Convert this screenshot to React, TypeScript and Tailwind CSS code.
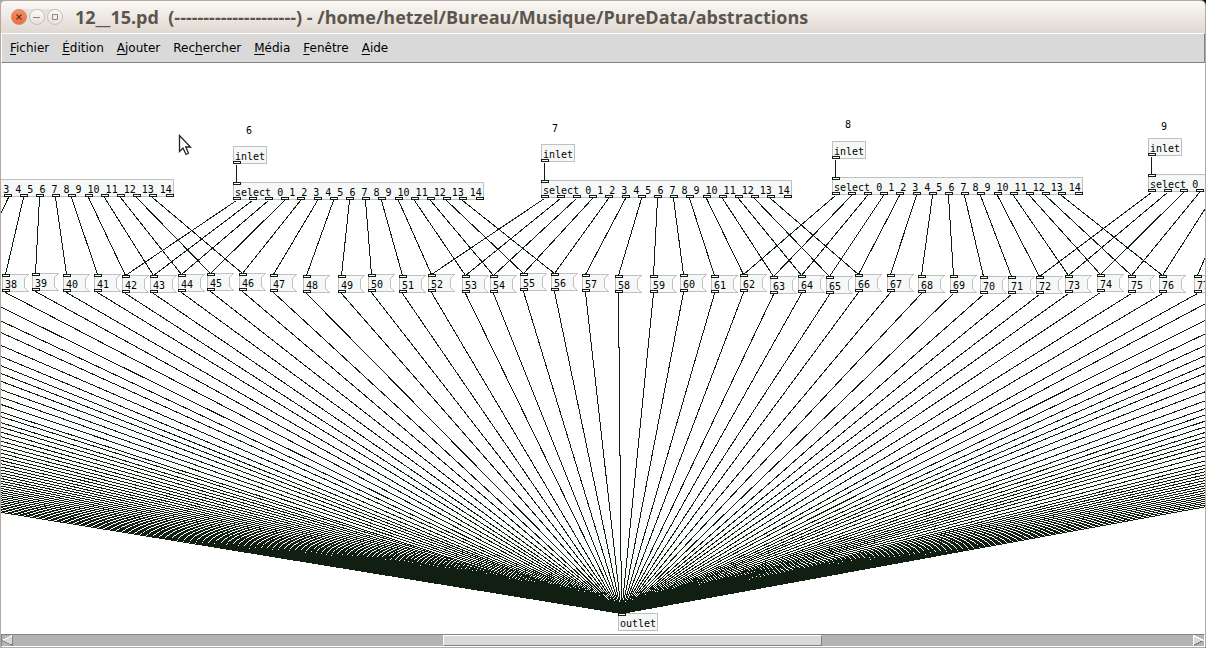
import type { ReactNode } from "react";

const INK = "#101f12";
const SELECT_WIDTH = 251;
const SELECT_OUTLETS = 16;
const BOX_HEIGHT = 18;
const FIRST_MESSAGE = 38;
// wires leave and enter at the middle of a port
const PORT_CENTER = 3;

// left, top of every message box, starting with 38
const messages = [
  [1, 211], [31, 210], [62, 211], [93, 211], [121, 212],
  [149, 212], [177, 211], [206, 210], [238, 210], [269, 211],
  [302, 212], [337, 212], [367, 211], [398, 212], [427, 211],
  [461, 212], [489, 212], [519, 210], [550, 210], [581, 211],
  [614, 212], [649, 212], [679, 211], [710, 212], [739, 211],
  [769, 213], [797, 212], [825, 213], [854, 211], [886, 211],
  [917, 212], [949, 212], [979, 213], [1007, 213], [1035, 213],
  [1064, 212], [1096, 211], [1127, 212], [1158, 212], [1193, 212],
];

// outlet `from` of each select feeds message `to`, the next ones follow
const selects = [
  { x: -78, y: 116, from: 6, to: 38 },
  { x: 232, y: 119, from: 0, to: 42 },
  { x: 540, y: 117, from: 0, to: 52 },
  { x: 831, y: 114, from: 0, to: 62 },
  { x: 1147, y: 111, from: 0, to: 72 },
];

const inlets = [
  { label: "6", x: 232, y: 83, labelX: 245, labelY: 62 },
  { label: "7", x: 540, y: 81, labelX: 551, labelY: 60 },
  { label: "8", x: 831, y: 78, labelX: 844, labelY: 56 },
  { label: "9", x: 1147, y: 75, labelX: 1160, labelY: 58 },
];

const outlet = { x: 617, y: 550 };

// messages scrolled out of view that are still wired to the outlet
const hiddenLeft = [
  -30, -61, -89, -123, -155, -184, -210, -238, -270, -301, -333, -369, -392,
  -424, -449, ...Array.from({ length: 31 }, (_, i) => -478 - i * 29),
];
const hiddenRight = [
  1225, 1259, 1290, 1319, 1347, 1375, 1400, 1432, 1465, 1501, 1535, 1564, 1594,
  1624, 1655, 1682, 1711, 1740, 1772, 1809, 1848, 1883,
  ...Array.from({ length: 17 }, (_, i) => 1912 + i * 29),
];

const menus = [
  ["", "F", "ichier"],
  ["", "É", "dition"],
  ["", "A", "jouter"],
  ["Rec", "h", "ercher"],
  ["", "M", "édia"],
  ["", "F", "enêtre"],
  ["", "A", "ide"],
];

const selectText = "select 0 1 2 3 4 5 6 7 8 9 10 11 12 13 14";

function outletOffset(i: number) {
  return Math.floor(((SELECT_WIDTH - 8) * i) / (SELECT_OUTLETS - 1));
}

function Wires() {
  // x1, y1, x2, y2 as port positions
  const lines: number[][] = [[4, 134, -33, 211]];

  inlets.forEach(({ x, y }) =>
    lines.push([x, y + BOX_HEIGHT, x, y + 2 * BOX_HEIGHT]),
  );

  selects.forEach((s) => {
    for (let i = s.from; i < SELECT_OUTLETS - 1; i++) {
      const target = messages[s.to - FIRST_MESSAGE + i - s.from];
      if (!target) break;
      lines.push([s.x + outletOffset(i), s.y + BOX_HEIGHT, target[0], target[1]]);
    }
  });

  messages.forEach(([x, y]) =>
    lines.push([x, y + BOX_HEIGHT, outlet.x, outlet.y]),
  );
  [...hiddenLeft, ...hiddenRight].forEach((x) =>
    lines.push([x - PORT_CENTER, 229, outlet.x, outlet.y]),
  );

  return (
    <svg
      className="absolute inset-0 size-full"
      shapeRendering="crispEdges"
      stroke={INK}
      aria-hidden="true"
    >
      <g transform={`translate(${PORT_CENTER + 0.5} 0.5)`}>
        {lines.map(([x1, y1, x2, y2], i) => (
          <line key={i} x1={x1} y1={y1} x2={x2} y2={y2} />
        ))}
      </g>
    </svg>
  );
}

function Port({ x = 0, bottom = false }: { x?: number; bottom?: boolean }) {
  return (
    <span
      className={`absolute h-[3px] w-2 border border-[#101f12] bg-white ${
        bottom ? "bottom-0" : "top-0"
      }`}
      style={{ left: x }}
    />
  );
}

function ObjectBox({
  x,
  y,
  text,
  children,
}: {
  x: number;
  y: number;
  text: string;
  children?: ReactNode;
}) {
  return (
    <div className="absolute h-[18px]" style={{ left: x, top: y }}>
      <div className="h-full border border-[#c0c0c0] bg-[#f6f8f8] px-px pt-1 leading-3 whitespace-pre">
        {text}
      </div>
      {children}
    </div>
  );
}

function MessageBox({ x, y, value }: { x: number; y: number; value: number }) {
  return (
    <button
      type="button"
      className="absolute h-[18px] w-[27px] pt-1 pl-[3px] text-left leading-3"
      style={{ left: x, top: y }}
    >
      <svg
        className="absolute inset-0"
        width="27"
        height="18"
        shapeRendering="crispEdges"
        aria-hidden="true"
      >
        <path
          d="M.5 .5H26.5L22.5 4.5V13.5L26.5 17.5H.5Z"
          fill="#f6f8f8"
          stroke="#c0c0c0"
        />
      </svg>
      <span className="relative">{value}</span>
      <Port />
      <Port bottom />
    </button>
  );
}

function TitleBar() {
  return (
    <header className="flex h-8 items-center bg-linear-to-b from-[#faf9f6] to-[#e0d8d1] pl-[10px]">
      <div className="flex gap-0.5 rounded-full bg-[#e6e2dc]">
        <button
          type="button"
          aria-label="Fermer"
          className="grid size-4 place-items-center rounded-full border border-[#d08a6c] bg-linear-to-b from-[#f58e66] to-[#ee6b3c]"
        >
          <svg width="6" height="6" stroke="#6b3420" strokeWidth="1.2">
            <path d="M.5 .5L5.5 5.5M5.5 .5L.5 5.5" />
          </svg>
        </button>
        <button
          type="button"
          aria-label="Réduire"
          className="grid size-4 place-items-center rounded-full border border-[#c6c1ba] bg-linear-to-b from-[#fbfaf8] to-[#e6e1db]"
        >
          <svg width="8" height="8" stroke="#8a8580">
            <path d="M0 4.5H7" />
          </svg>
        </button>
        <button
          type="button"
          aria-label="Agrandir"
          className="grid size-4 place-items-center rounded-full border border-[#c6c1ba] bg-linear-to-b from-[#fbfaf8] to-[#e6e1db]"
        >
          <svg width="8" height="8" fill="none" stroke="#8a8580">
            <path d="M1.5 1.5H6.5V6.5H1.5Z" />
          </svg>
        </button>
      </div>
      <h1 className="ml-3 font-['Open_Sans',sans-serif] text-lg leading-6 font-bold whitespace-pre text-[#5c554d]">
        {"12__15.pd  (---------------------) - /home/hetzel/Bureau/Musique/PureData/abstractions"}
      </h1>
    </header>
  );
}

function MenuBar() {
  return (
    <nav className="flex h-[30px] items-center gap-[13px] border border-t-white border-r-[#838383] border-b-[#838383] border-l-white bg-[#d9d9d9] pl-2 font-['DejaVu_Sans',sans-serif] text-[12px] text-black">
      {menus.map(([before, key, after]) => (
        <button key={before + key + after} type="button">
          {before}
          <span className="underline underline-offset-2">{key}</span>
          {after}
        </button>
      ))}
    </nav>
  );
}

function Patch() {
  return (
    <main className="relative min-h-[571px] flex-1 overflow-hidden bg-white font-['DejaVu_Sans_Mono',monospace] text-[10px] text-black">
      <Wires />

      {inlets.map((inlet) => (
        <div key={inlet.label}>
          <p
            className="absolute leading-3"
            style={{ left: inlet.labelX, top: inlet.labelY }}
          >
            {inlet.label}
          </p>
          <ObjectBox x={inlet.x} y={inlet.y} text="inlet">
            <Port bottom />
          </ObjectBox>
        </div>
      ))}

      {selects.map((s) => (
        <ObjectBox key={s.x} x={s.x} y={s.y} text={selectText}>
          <Port />
          {Array.from({ length: SELECT_OUTLETS }, (_, i) => (
            <Port key={i} x={outletOffset(i)} bottom />
          ))}
        </ObjectBox>
      ))}

      {messages.map(([x, y], i) => (
        <MessageBox key={i} x={x} y={y} value={FIRST_MESSAGE + i} />
      ))}

      <ObjectBox x={outlet.x} y={outlet.y} text="outlet">
        <Port />
      </ObjectBox>

      <svg
        className="absolute top-[71px] left-[177px]"
        width="14"
        height="22"
        aria-hidden="true"
      >
        <path
          d="M1.5 1.5V17.5L5 14L8 20.5L10.5 19.3L7.8 13H12.5Z"
          fill="white"
          stroke="#222"
          strokeWidth="1.3"
        />
      </svg>
    </main>
  );
}

function ScrollBar() {
  return (
    <footer className="flex h-[13px] border border-t-[#838383] border-r-white border-b-white border-l-[#838383] bg-[#b3b3b3]">
      <button type="button" aria-label="Défiler à gauche" className="w-[11px]">
        <svg width="11" height="11" shapeRendering="crispEdges">
          <path d="M0 5.5L10.5 .5V10.5Z" fill="#d9d9d9" />
          <path d="M0 5.5L10.5 .5" stroke="white" />
          <path d="M0 5.5L10.5 10.5V.5" fill="none" stroke="#838383" />
        </svg>
      </button>
      <div className="flex flex-1">
        <div className="grow-[430] basis-0" />
        <div className="grow-[377] basis-0 border border-t-white border-r-[#838383] border-b-[#838383] border-l-white bg-[#d9d9d9]" />
        <div className="grow-[371] basis-0" />
      </div>
      <button type="button" aria-label="Défiler à droite" className="w-[11px]">
        <svg width="11" height="11" shapeRendering="crispEdges">
          <path d="M.5 .5L10.5 5.5L.5 10.5Z" fill="#d9d9d9" />
          <path d="M.5 10.5L10.5 5.5" stroke="#838383" />
          <path d="M.5 10.5V.5L10.5 5.5" fill="none" stroke="white" />
        </svg>
      </button>
    </footer>
  );
}

export default function App() {
  return (
    <div className="min-h-screen bg-linear-to-r from-[#a9a9a9] to-[#0a1220]">
      <div className="flex min-h-screen flex-col overflow-hidden rounded-t-[5px] border border-[#b8a9a0]">
        <TitleBar />
        <MenuBar />
        <Patch />
        <ScrollBar />
      </div>
    </div>
  );
}
